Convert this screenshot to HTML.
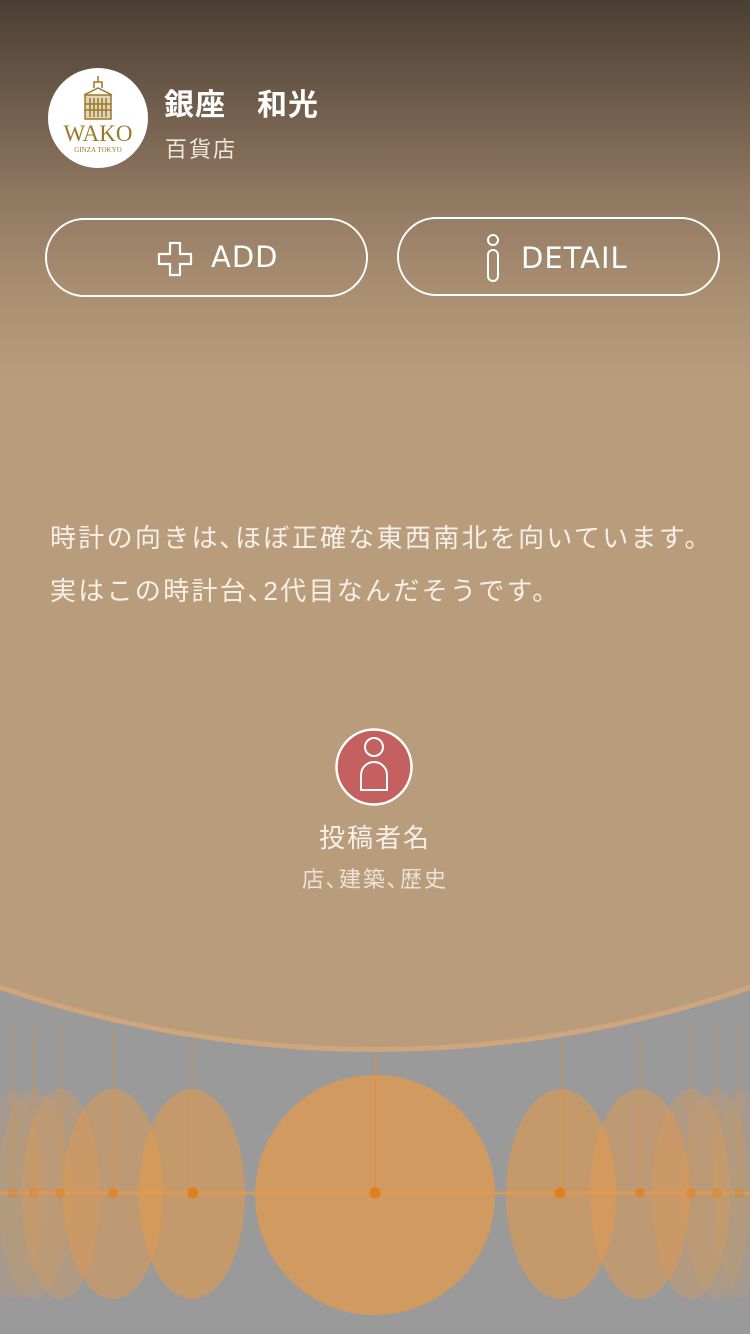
<!DOCTYPE html>
<html><head><meta charset="utf-8"><style>
*{margin:0;padding:0;box-sizing:border-box}
body{width:750px;height:1334px;overflow:hidden;position:relative;background:#9a9a9a;font-family:"Liberation Sans","Noto Sans CJK JP",sans-serif;color:#fff}
.top{position:absolute;left:-790px;top:-1278px;width:2330px;height:2330px;border-radius:50%;background:#b89c7c;border:5px solid #cfa57c;overflow:hidden}
.grad{position:absolute;left:0;top:0;width:750px;height:380px;background:linear-gradient(#4a3e33 0%,#6c5a49 25%,#8e7660 50%,#a88d70 75%,#b89c7c 100%)}
.logo{position:absolute;left:48px;top:68px;width:100px;height:100px;border-radius:50%;background:#fff}
.name{position:absolute;left:164px;top:80px;font-size:30px;font-weight:bold;letter-spacing:1px}
.cat{position:absolute;left:165px;top:132px;font-size:22px;color:#eee8e0;letter-spacing:2px}
.btn{position:absolute;height:79px;width:323px;border:2.5px solid #fff;border-radius:40px;font-family:"DejaVu Sans","Liberation Sans",sans-serif;font-size:29px;letter-spacing:1px}
.msg{position:absolute;left:50px;font-size:26px;color:#f6f0e8;letter-spacing:2.3px}
</style></head><body>
<div class="top"></div>
<div class="grad"></div>
<div class="logo">
<svg width="100" height="100" viewBox="0 0 100 100">
<g fill="none" stroke="#9a7a2a" stroke-width="1.5">
<rect x="37" y="27" width="26" height="24" fill="#b89550" fill-opacity=".4"/>
<path d="M36 27 L50 20 L64 27"/><path d="M46 20 V14 H54 V20"/><path d="M50 14 V8"/>
<path d="M42 30V49M46 30V49M50 30V49M54 30V49M58 30V49M37 36H63M37 42H63"/>
</g>
<text x="50" y="73" text-anchor="middle" font-family="Liberation Serif,serif" font-size="23" fill="#9a7a2a">WAKO</text>
<text x="50" y="84" text-anchor="middle" font-family="Liberation Serif,serif" font-size="7" fill="#9a7a2a">GINZA TOKYO</text>
</svg></div>
<div class="name">銀座　和光</div>
<div class="cat">百貨店</div>
<div class="btn" style="left:45px;top:218px">
<svg style="position:absolute;left:110px;top:21px" width="36" height="36" viewBox="0 0 36 36"><path d="M13 2H23V13H34V23H23V34H13V23H2V13H13Z" fill="none" stroke="#fff" stroke-width="2.2"/></svg>
<span style="position:absolute;left:164px;top:20px">ADD</span></div>
<div class="btn" style="left:397px;top:217px">
<svg style="position:absolute;left:86px;top:13px" width="16" height="52" viewBox="0 0 16 52"><circle cx="8" cy="8" r="5" fill="none" stroke="#fff" stroke-width="2"/><rect x="3" y="18" width="10" height="31" rx="5" fill="none" stroke="#fff" stroke-width="2"/></svg>
<span style="position:absolute;left:122px;top:22px">DETAIL</span></div>
<div class="msg" style="top:518px">時計の向きは､ほぼ正確な東西南北を向いています。</div>
<div class="msg" style="top:571px">実はこの時計台､2代目なんだそうです。</div>
<svg style="position:absolute;left:334px;top:727px" width="80" height="80" viewBox="0 0 80 80"><circle cx="40" cy="40" r="37.5" fill="#c46060" stroke="#fff" stroke-width="2.5"/><circle cx="40" cy="20" r="9" fill="none" stroke="#fff" stroke-width="2"/><path d="M27 63V48a13 13 0 0 1 26 0V63Z" fill="none" stroke="#fff" stroke-width="2"/></svg>
<div style="position:absolute;left:0;width:750px;top:818px;text-align:center;font-size:26px;letter-spacing:2px;color:#f6f0e8">投稿者名</div>
<div style="position:absolute;left:0;width:750px;top:862px;text-align:center;font-size:22px;letter-spacing:2px;color:#ece2d6">店､建築､歴史</div>
<svg style="position:absolute;left:0;top:1000px" width="750" height="334" viewBox="0 1000 750 334">
<g stroke="#e0913a" stroke-width="1.2" stroke-opacity=".6">
<line x1="13" y1="1030" x2="13" y2="1193"/><line x1="34" y1="1030" x2="34" y2="1193"/><line x1="61" y1="1030" x2="61" y2="1193"/><line x1="113" y1="1030" x2="113" y2="1193"/><line x1="192" y1="1040" x2="192" y2="1193"/><line x1="375" y1="1055" x2="375" y2="1193" stroke-width="2"/><line x1="561" y1="1040" x2="561" y2="1193"/><line x1="640" y1="1030" x2="640" y2="1193"/><line x1="691" y1="1030" x2="691" y2="1193"/><line x1="717" y1="1030" x2="717" y2="1193"/><line x1="739" y1="1030" x2="739" y2="1193"/>
</g>
<g fill="#e89a48">
<ellipse cx="13" cy="1194" rx="30" ry="105" fill-opacity=".15"/>
<ellipse cx="34" cy="1194" rx="36" ry="105" fill-opacity=".2"/>
<ellipse cx="61" cy="1194" rx="39" ry="105" fill-opacity=".3"/>
<ellipse cx="113" cy="1194" rx="50" ry="105" fill-opacity=".45"/>
<ellipse cx="192" cy="1194" rx="53" ry="105" fill-opacity=".55"/>
<ellipse cx="561" cy="1194" rx="55" ry="105" fill-opacity=".55"/>
<ellipse cx="640" cy="1194" rx="50" ry="105" fill-opacity=".45"/>
<ellipse cx="691" cy="1194" rx="39" ry="105" fill-opacity=".3"/>
<ellipse cx="717" cy="1194" rx="33" ry="105" fill-opacity=".2"/>
<ellipse cx="739" cy="1194" rx="25" ry="105" fill-opacity=".15"/>
</g>
<line x1="0" y1="1193" x2="750" y2="1193" stroke="#e8984a" stroke-width="3" stroke-opacity=".8"/>
<circle cx="375" cy="1195" r="120" fill="#d19a60"/>
<line x1="375" y1="1075" x2="375" y2="1193" stroke="#e0913a" stroke-width="2" stroke-opacity=".6"/>
<line x1="255" y1="1193" x2="495" y2="1193" stroke="#e8984a" stroke-width="3" stroke-opacity=".6"/>
<g fill="#e07f1c">
<circle cx="13" cy="1193" r="5" fill-opacity=".3"/><circle cx="34" cy="1193" r="5" fill-opacity=".4"/><circle cx="60" cy="1193" r="5" fill-opacity=".5"/><circle cx="113" cy="1193" r="5" fill-opacity=".7"/><circle cx="193" cy="1193" r="5.5"/><circle cx="375" cy="1193" r="5.5"/><circle cx="560" cy="1193" r="5.5"/><circle cx="640" cy="1193" r="5" fill-opacity=".7"/><circle cx="691" cy="1193" r="5" fill-opacity=".5"/><circle cx="717" cy="1193" r="5" fill-opacity=".4"/><circle cx="739" cy="1193" r="5" fill-opacity=".3"/>
</g>
</svg>
</body></html>
